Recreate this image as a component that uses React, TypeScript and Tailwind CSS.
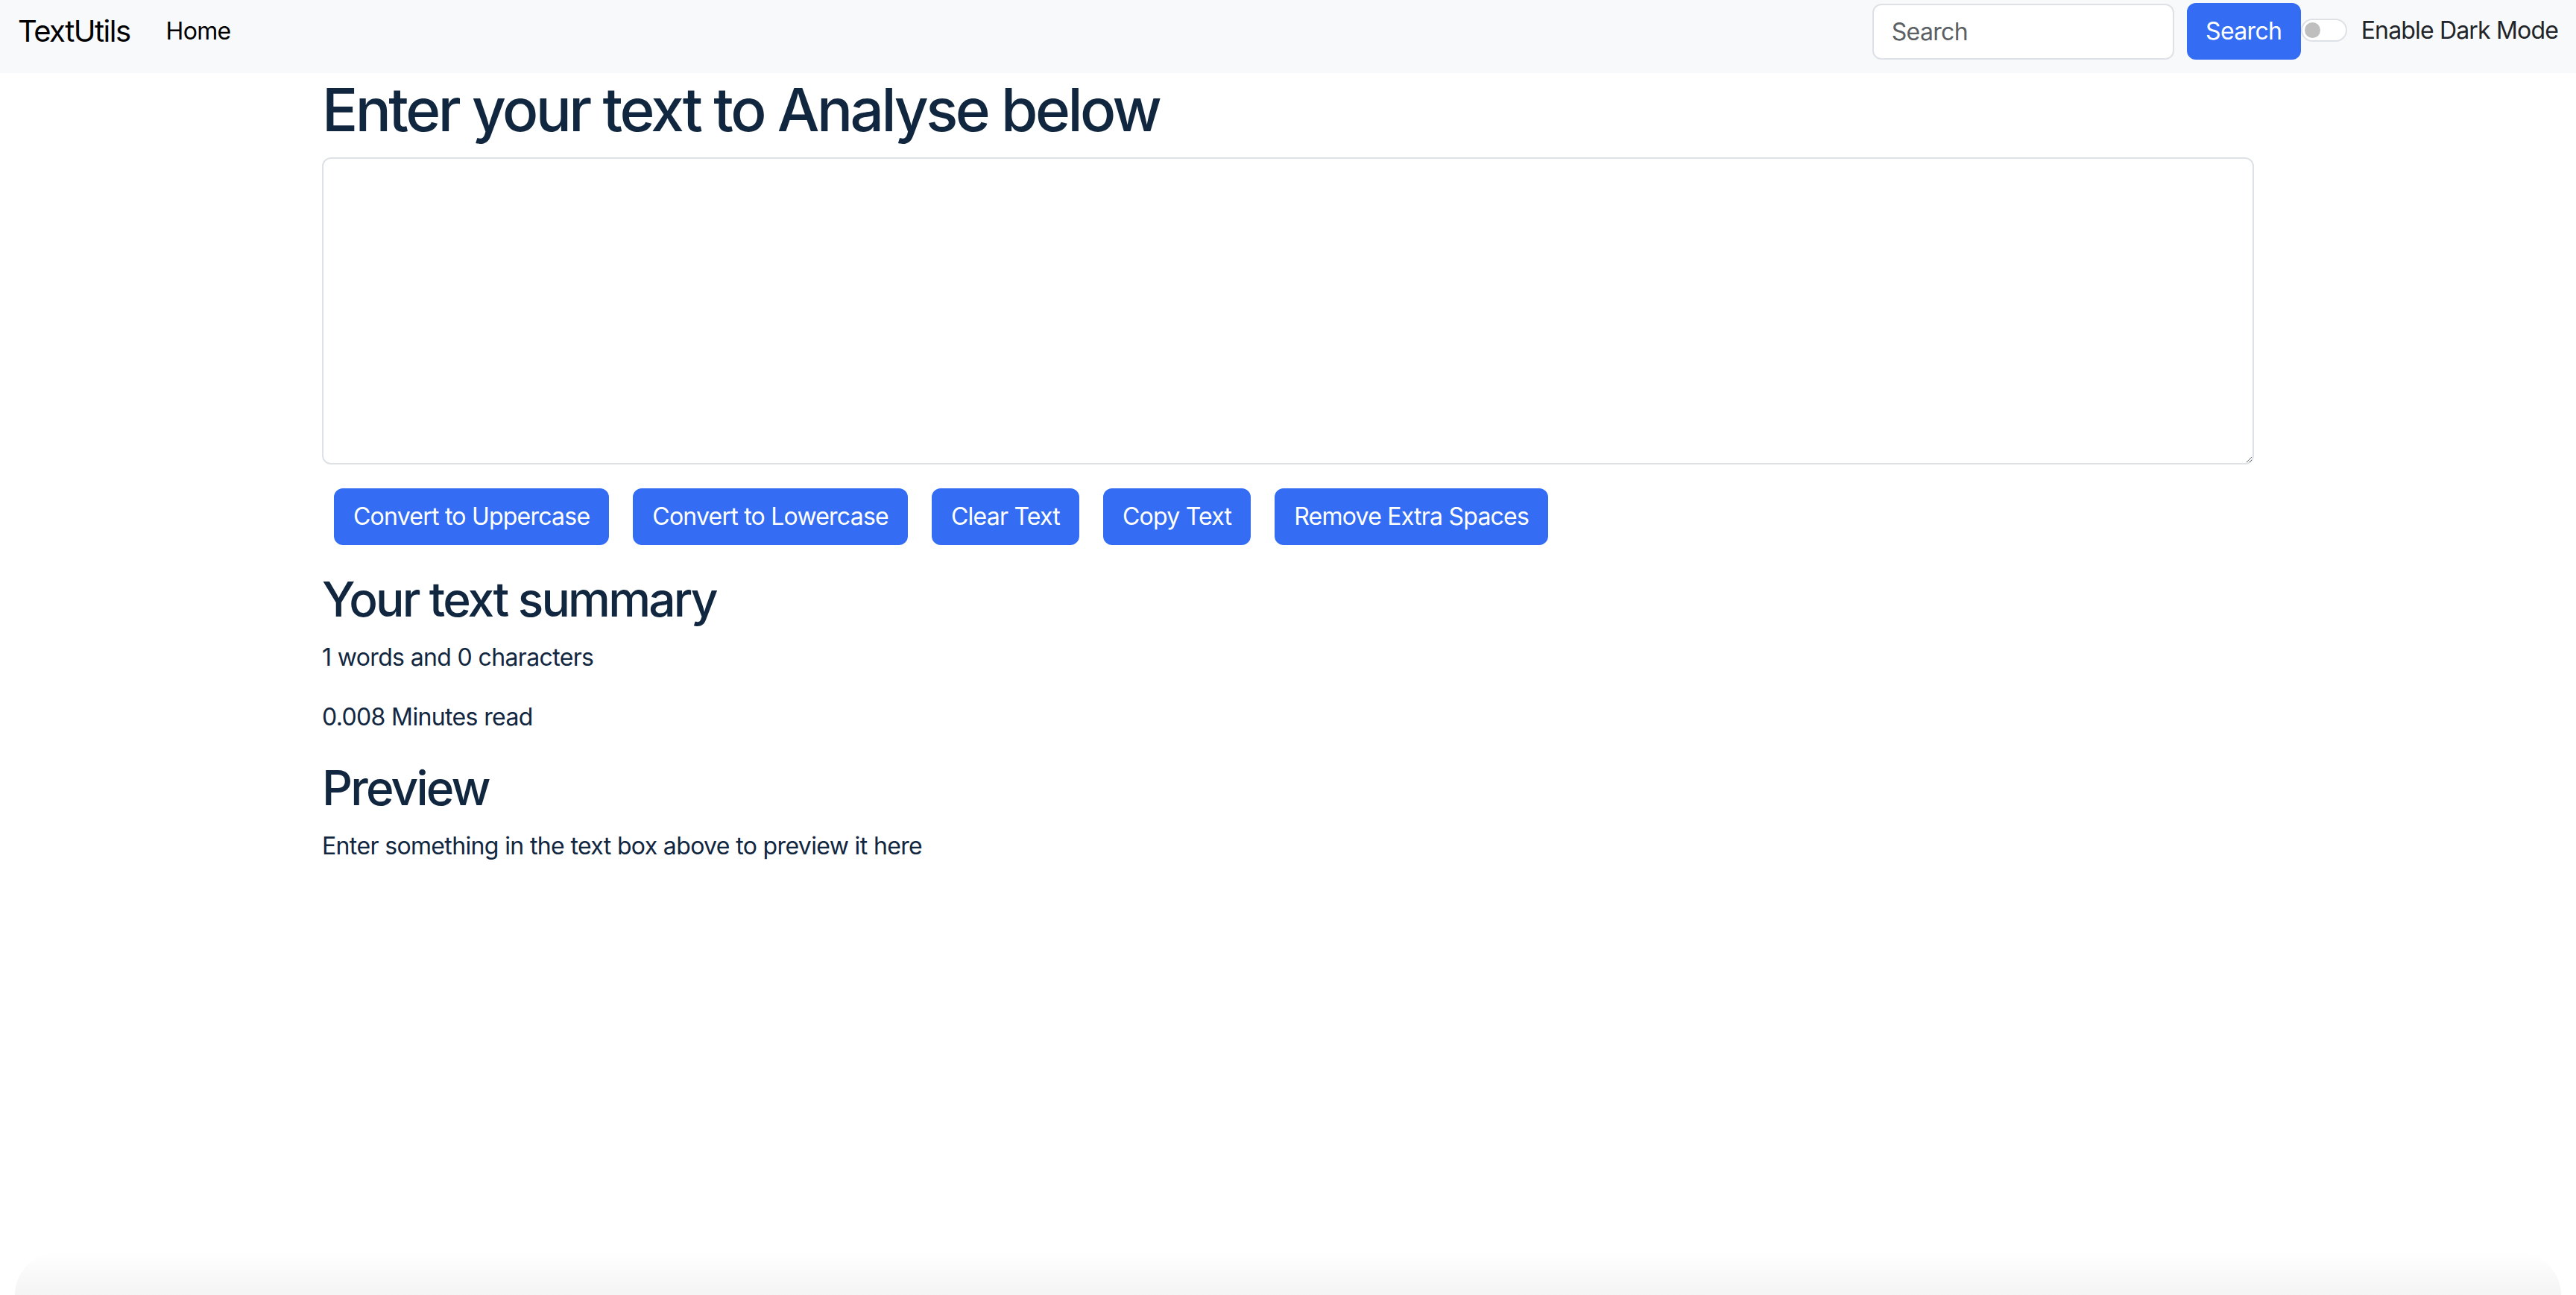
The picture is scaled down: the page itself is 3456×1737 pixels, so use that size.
import React from "react";

const buttons = [
  "Convert to Uppercase",
  "Convert to Lowercase",
  "Clear Text",
  "Copy Text",
  "Remove Extra Spaces",
];

export default function App() {
  return (
    <div
      className="flex min-h-[1737px] flex-col bg-white"
      style={{ fontFamily: "Inter, 'Noto Sans', sans-serif" }}
    >
      <nav className="flex h-[98px] items-center justify-between bg-[#f8f9fa] px-[24px] pb-[14px]">
        <div className="flex items-center">
          <a className="mr-[32px] text-[40px] leading-[60px] tracking-[-0.038em] text-black">TextUtils</a>
          <a className="px-[16px] text-[32px] leading-[48px] tracking-[-0.02em] text-black">Home</a>
        </div>
        <div className="flex items-center">
          <input
            placeholder="Search"
            className="h-[75px] w-[405px] rounded-[12px] border-2 border-[#dee2e6] bg-white px-[24px] text-[32px] tracking-[-0.02em] text-[#212529] outline-none placeholder:text-[#5c5f63]"
          />
          <button className="ml-[17px] h-[76px] w-[153px] rounded-[12px] border-2 border-[#346df4] bg-[#346df4] text-[32px] tracking-[-0.02em] text-white">
            Search
          </button>
          <div className="-mt-[4px] flex h-[31px] w-[62px] items-center rounded-full border-2 border-[#dee2e6] bg-white pl-[3px]">
            <span className="h-[21px] w-[21px] rounded-full bg-[#bfbfbf]" />
          </div>
          <span className="-mt-[3px] ml-[19px] text-[32px] leading-[48px] tracking-[-0.026em] text-[#212529]">
            Enable Dark Mode
          </span>
        </div>
      </nav>

      <main className="mx-auto w-[2592px] flex-1 text-[#11263f]">
        <h1 className="mb-[16px] mt-[1px] text-[80px] font-medium leading-[96px] tracking-[-0.044em]">
          Enter your text to Analyse below
        </h1>
        <textarea className="block h-[412px] w-full resize-y rounded-[12px] border-2 border-[#dee2e6] bg-white px-[24px] py-[12px] text-[32px] outline-none" />
        <div className="mt-[32px] flex gap-[32px] pl-[16px]">
          {buttons.map((b) => (
            <button
              key={b}
              className="h-[76px] rounded-[12px] border-2 border-[#346df4] bg-[#346df4] px-[24px] text-[32px] leading-[48px] tracking-[-0.024em] text-white"
            >
              {b}
            </button>
          ))}
        </div>
        <h2 className="mb-[16px] mt-[34px] text-[64px] font-medium leading-[77px] tracking-[-0.044em]">
          Your text summary
        </h2>
        <p className="mb-[32px] text-[32px] leading-[48px] tracking-[-0.02em]">1 words and 0 characters</p>
        <p className="mb-[32px] text-[32px] leading-[48px] tracking-[-0.02em]">0.008 Minutes read</p>
        <h2 className="mb-[16px] text-[64px] font-medium leading-[77px] tracking-[-0.044em]">Preview</h2>
        <p className="mb-[32px] text-[32px] leading-[48px] tracking-[-0.02em]">
          Enter something in the text box above to preview it here
        </p>
      </main>

      <div className="mx-[20px] h-[57px] rounded-t-[60px] bg-gradient-to-b from-white to-[#f4f4f4]" />
    </div>
  );
}
